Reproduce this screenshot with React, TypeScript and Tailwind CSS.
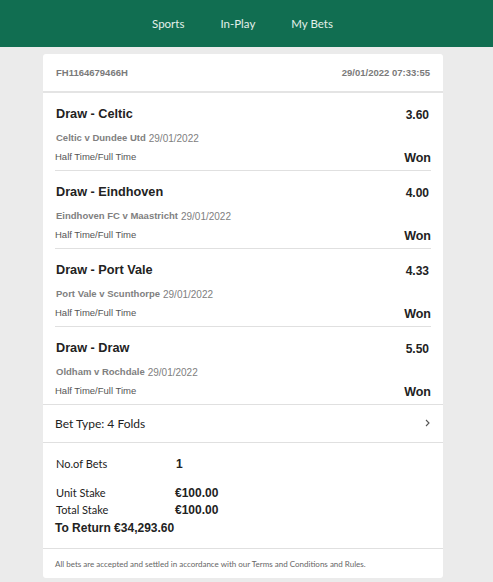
import React from "react";

const legs = [
  { title: "Draw - Celtic", odds: "3.60", match: "Celtic v Dundee Utd" },
  { title: "Draw - Eindhoven", odds: "4.00", match: "Eindhoven FC v Maastricht" },
  { title: "Draw - Port Vale", odds: "4.33", match: "Port Vale v Scunthorpe" },
  { title: "Draw - Draw", odds: "5.50", match: "Oldham v Rochdale" },
];

const arial = "font-['Liberation_Sans',Arial,sans-serif]";
const segoe = "font-['Lato','Open_Sans',sans-serif]";

export default function App() {
  return (
    <div className="min-h-[582px] bg-[#ebebeb] pb-[6px]">
      <div className={`h-[47px] bg-[#116e51] flex items-center justify-center gap-[36px] pr-[8px] text-[11.5px] text-[#e3f0ea] ${segoe}`}>
        <span>Sports</span>
        <span>In-Play</span>
        <span>My Bets</span>
      </div>
      <div className="ml-[43px] mt-[7px] w-[400px] bg-white rounded-[3px]">
        <div className={`h-[39px] flex items-center justify-between px-[13px] pt-[2px] text-[9.5px] font-bold text-[#7a7a7a] border-b-2 border-[#e4e4e4] ${arial}`}>
          <span>FH1164679466H</span>
          <span>29/01/2022 07:33:55</span>
        </div>
        <div className="px-[12px]">
          {legs.map((l, i) => (
            <div
              key={i}
              className={`pt-[14px] pb-[6px] ${i < legs.length - 1 ? "border-b border-[#e0e0e0]" : ""} ${arial}`}
            >
              <div className="flex justify-between items-center h-[16px] font-bold text-[#222]">
                <span className="text-[12.7px] pl-[1px]">{l.title}</span>
                <span className="text-[12px] pr-[2px]">{l.odds}</span>
              </div>
              <div className="mt-[8px] h-[14px] flex items-center text-[#808080]">
                <span className="font-bold text-[9.5px] pl-[1px]">{l.match}</span>
                <span className="ml-[3px] text-[10px]">29/01/2022</span>
              </div>
              <div className="mt-[5px] h-[14px] flex justify-between items-center">
                <span className="text-[9.5px] text-[#555]">Half Time/Full Time</span>
                <span className="text-[12.5px] font-bold text-[#222] relative top-[1px]">Won</span>
              </div>
            </div>
          ))}
        </div>
        <div className={`h-[39px] border-t border-b border-[#e0e0e0] flex items-center justify-between pl-[12px] pr-[13px] pt-[1px] text-[12px] text-[#222] ${segoe}`}>
          <span>Bet Type: 4 Folds</span>
          <svg width="5" height="8" viewBox="0 0 5 8" className="-mt-[2px]">
            <path d="M1 1 L4 4 L1 7" fill="none" stroke="#555" strokeWidth="1.1" />
          </svg>
        </div>
        <div className="pt-[13px] pb-[12px] px-[13px] border-b border-[#e0e0e0]">
          <div className={`flex h-[16px] items-center text-[11px] text-[#222] ${segoe}`}>
            <span className="w-[120px]">No.of Bets</span>
            <span className={`font-bold text-[12px] ${arial}`}>1</span>
          </div>
          <div className={`mt-[13px] flex h-[16px] items-center text-[11px] text-[#222] ${segoe}`}>
            <span className="w-[119px]">Unit Stake</span>
            <span className={`font-bold text-[12px] ${arial}`}>€100.00</span>
          </div>
          <div className={`mt-[1px] flex h-[16px] items-center text-[11px] text-[#222] ${segoe}`}>
            <span className="w-[119px]">Total Stake</span>
            <span className={`font-bold text-[12px] ${arial}`}>€100.00</span>
          </div>
          <div className={`mt-[2px] h-[16px] flex items-center text-[12px] font-bold text-[#222] -ml-[1px] ${arial}`}>
            To Return €34,293.60
          </div>
        </div>
        <div className={`h-[29px] flex items-center px-[12px] text-[8px] text-[#666] ${segoe}`}>
          All bets are accepted and settled in accordance with our Terms and Conditions and Rules.
        </div>
      </div>
    </div>
  );
}
